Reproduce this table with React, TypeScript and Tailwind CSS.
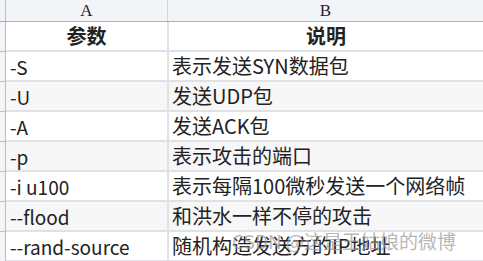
import React from "react";

const rows = [
  { a: "参数", b: "说明", head: true },
  { a: "-S", b: "表示发送SYN数据包" },
  { a: "-U", b: "发送UDP包" },
  { a: "-A", b: "发送ACK包" },
  { a: "-p", b: "表示攻击的端口" },
  { a: "-i u100", b: "表示每隔100微秒发送一个网络帧" },
  { a: "--flood", b: "和洪水一样不停的攻击" },
  { a: "--rand-source", b: "随机构造发送方的IP地址" },
];

const font = { fontFamily: '"Noto Sans CJK SC", "Noto Sans", sans-serif' };

export default function App() {
  return (
    <div className="relative w-[483px] h-[261px] overflow-hidden bg-white text-[#222]" style={font}>
      {/* column letters */}
      <div className="flex h-[22px] bg-[#f3f4f7] border-b border-[#a9b0bf] font-['Liberation_Serif',serif] text-[17px] text-[#1e2230]">
        <div className="w-[6px] border-r border-[#b7bdcb]" />
        <div className="w-[162px] flex items-center justify-center border-r border-[#cfd4dd] leading-none">A</div>
        <div className="flex-1 flex items-center justify-center leading-none">B</div>
      </div>

      {rows.map((r, i) => (
        <div key={i} className="flex h-[30px]">
          <div className="w-[6px] bg-[#f3f4f7] border-r border-b border-[#b7bdcb]" />
          <div
            className={`w-[161px] flex items-center border-b-2 border-[#dfe1e5] leading-none whitespace-nowrap ${
              r.head ? "justify-center font-bold text-[20px]" : "pl-[4px] text-[19px]"
            } ${i % 2 === 0 && i > 1 ? "bg-[#f7f7f7]" : "bg-white"}`}
          >
            {r.a}
          </div>
          <div className="w-[2px] bg-[#dfe1e5]" />
          <div
            className={`flex-1 flex items-center border-b-2 border-[#dfe1e5] text-[20px] leading-none whitespace-nowrap ${
              r.head ? "justify-center font-bold" : "pl-[3px]"
            } ${i % 2 === 0 && i > 1 ? "bg-[#f7f7f7]" : "bg-white"}`}
          >
            {r.b}
          </div>
        </div>
      ))}

      <div className="absolute left-[232px] top-[229px] text-[19px] leading-[24px] text-[#9a9a9a] opacity-70 whitespace-nowrap">
        CSDN @这是王姑娘的微博
      </div>
    </div>
  );
}
